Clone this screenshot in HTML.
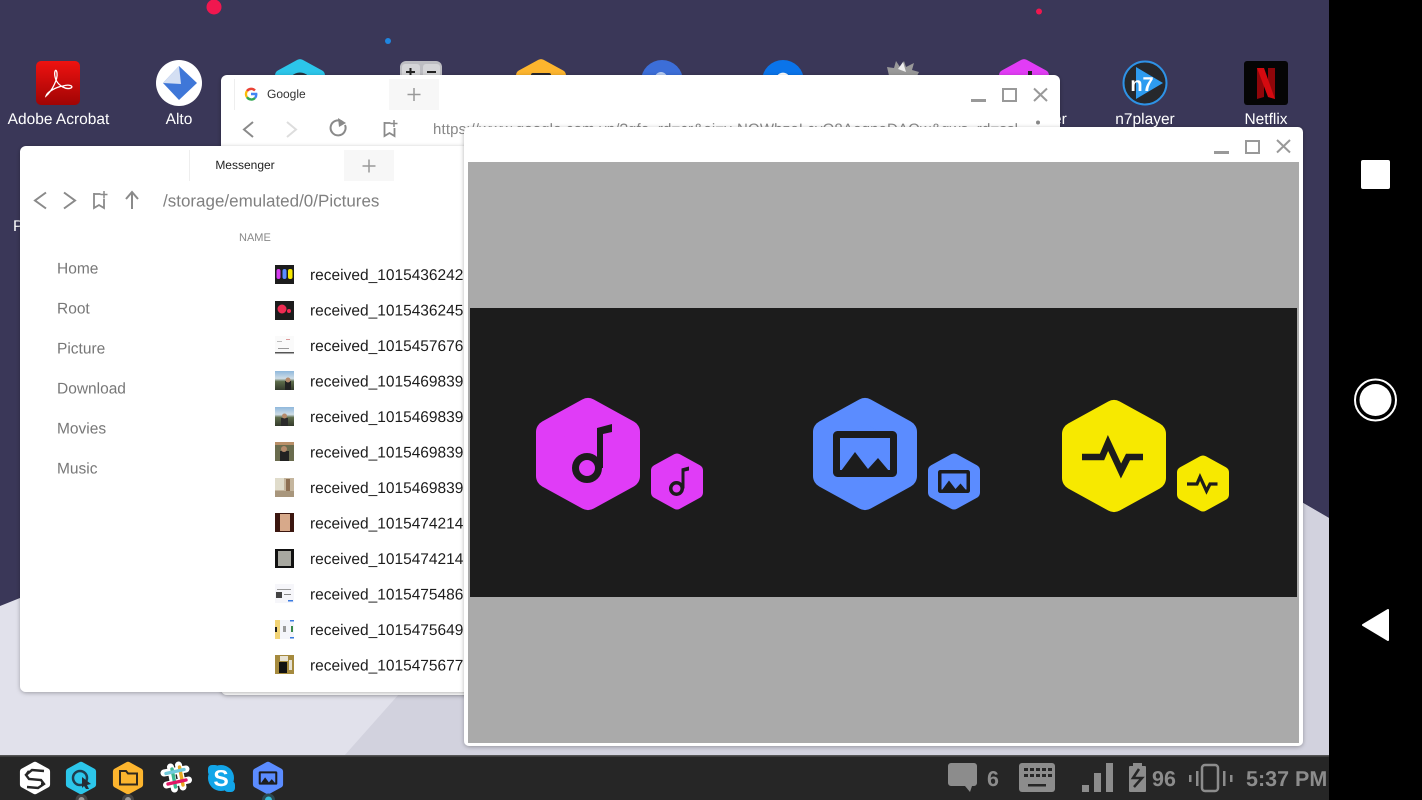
<!DOCTYPE html>
<html><head><meta charset="utf-8"><title>Desktop</title>
<style>
html,body{margin:0;padding:0;background:#000;overflow:hidden}
svg{display:block;position:absolute;left:0;top:0;filter:blur(.35px)}
text{font-family:"Liberation Sans",sans-serif;text-rendering:geometricPrecision}
</style></head><body>
<svg width="1422" height="800" viewBox="0 0 1422 800" xmlns="http://www.w3.org/2000/svg">
<defs>
<polygon id="h" points="0,-44 40,-22 40,22 0,44 -40,22 -40,-22" stroke-width="24" stroke-linejoin="round"/>
<g id="note"><circle cx="-1" cy="14" r="11.5" fill="none" stroke="#1c1c1c" stroke-width="7"/><polygon points="9,-26 24,-30 24,-22 15,-20 15,14 9,14" fill="#1c1c1c"/></g>
<g id="pic"><rect x="-28.5" y="-19.5" width="57" height="39" rx="1" fill="none" stroke="#1c1c1c" stroke-width="7"/><polygon points="-24,17 -10,-2 3,15 13,4 24,17" fill="#1c1c1c"/></g>
<polyline id="pulse" points="-32,1 -12,1 -6,-13 7,15 14,1 29,1" fill="none" stroke="#1c1c1c" stroke-width="6.5"/>
<filter id="s" x="-5%" y="-5%" width="110%" height="110%"><feDropShadow dx="0" dy="1" stdDeviation="2" flood-color="#000" flood-opacity=".3"/></filter>
<linearGradient id="red" x1="0" y1="0" x2="0" y2="1"><stop offset="0" stop-color="#ee1210"/><stop offset="1" stop-color="#a00404"/></linearGradient>
<linearGradient id="sky" x1="0" y1="0" x2="0" y2="1"><stop offset="0" stop-color="#8fb8dc"/><stop offset=".4" stop-color="#cfdde6"/><stop offset=".55" stop-color="#5d6c4a"/><stop offset="1" stop-color="#343a2c"/></linearGradient>
</defs>

<!-- wallpaper -->
<rect width="1329" height="800" fill="#3a3758"/>
<polygon points="0,606 876,255 1329,518 1329,760 0,760" fill="#e1e1eb"/>
<polygon points="344,756 700,355 876,255 1329,518 1329,760" fill="#d2d2de"/>
<circle cx="214" cy="7" r="7.5" fill="#f0174f"/>
<circle cx="388" cy="41" r="3" fill="#1f86e0"/>
<circle cx="1039" cy="11.5" r="3" fill="#f0174f"/>

<!-- desktop icons -->
<rect x="36" y="61" width="44" height="44" rx="5" fill="url(#red)"/>
<path d="M46 96C52 91 58 79 57 73C56 67 53 72 56 80C59 86 66 90 71 88C74 86 69 84 63 86C56 87 47 92 46 96Z" fill="none" stroke="#fff" stroke-width="1.3"/>
<text x="58.500" y="124" font-size="15.500" fill="#fff" text-anchor="middle">Adobe Acrobat</text>
<circle cx="179" cy="83" r="23" fill="#fff"/>
<polygon points="179,66 197,83 179,100 163,83" fill="#3f77d8"/>
<polygon points="179,66 181,84 163,83" fill="#d4dff3"/>
<text x="179" y="124" font-size="15.500" fill="#fff" text-anchor="middle">Alto</text>
<g transform="translate(300,86) scale(.48)"><use href="#h" fill="#2cc6ea" stroke="#2cc6ea"/></g>
<circle cx="300" cy="84" r="9" fill="none" stroke="#26323f" stroke-width="5"/>
<rect x="400" y="61" width="42" height="40" rx="6" fill="#bdbdc2"/>
<rect x="402" y="64" width="18" height="20" rx="3" fill="#d5d5d8"/><rect x="423" y="64" width="17" height="20" rx="3" fill="#d5d5d8"/>
<path d="M406 72h9M410.500 68v8M427 72h9" stroke="#222" stroke-width="2"/>
<g transform="translate(541,86) scale(.48)"><use href="#h" fill="#fdb52e" stroke="#fdb52e"/></g>
<rect x="531" y="73" width="20" height="8" rx="2" fill="#26262e"/>
<circle cx="662" cy="81" r="21" fill="#3c6ed8"/><circle cx="661" cy="78" r="6" fill="#b9cdf2"/>
<circle cx="783" cy="81" r="21" fill="#0a74ea"/><path d="M771 82a6 6 0 0 1 6-6a7 7 0 0 1 12 0a6 6 0 0 1 6 6z" fill="#fff"/>
<polygon points="887,67 894,68 896,61 900,67 904,61 906,67 914,63 912,70 919,72 915,80 890,80" fill="#999"/>
<polygon points="898,69 903,62 906,72" fill="#eee"/>
<g transform="translate(1024,86) scale(.48)"><use href="#h" fill="#e23cf6" stroke="#e23cf6"/></g>
<rect x="1028" y="71" width="4" height="6" fill="#222"/>
<text x="1053" y="124" font-size="15.500" fill="#fff">er</text>
<circle cx="1145" cy="83" r="21.500" fill="#26282c" stroke="#2e92e6" stroke-width="2"/>
<polygon points="1136,67 1163,83 1136,99" fill="#2e9cf0"/>
<text x="1142" y="91" font-size="20" font-weight="bold" fill="#fff" text-anchor="middle">n7</text>
<text x="1145" y="124" font-size="15.500" fill="#fff" text-anchor="middle">n7player</text>
<rect x="1244" y="61" width="44" height="44" rx="3" fill="#050505"/>
<polygon points="1257,68 1264,68 1264,97 1257,99" fill="#8f060a"/><polygon points="1268,68 1275,68 1275,99 1268,97" fill="#8f060a"/>
<polygon points="1257,68 1264,68 1275,99 1268,97" fill="#d40a10"/>
<text x="1266" y="124" font-size="15.500" fill="#fff" text-anchor="middle">Netflix</text>
<text x="13" y="231" font-size="15.500" fill="#fff">P</text>

<!-- chrome window -->
<rect x="221" y="75" width="839" height="620" rx="6" fill="#fff" filter="url(#s)"/>
<rect x="234" y="79" width="1" height="31" fill="#eee"/>
<g fill="none" stroke-width="2.400">
<path d="M255 90.500A5.200 5.200 0 0 0 247 91" stroke="#ea4335"/>
<path d="M247 91A5.200 5.200 0 0 0 247 97.200" stroke="#fbbc05"/>
<path d="M247 97.200A5.200 5.200 0 0 0 255 98" stroke="#34a853"/>
<path d="M255 98A5.200 5.200 0 0 0 256.200 94H251" stroke="#4285f4"/>
</g>
<text x="267" y="98" font-size="12" fill="#333">Google</text>
<rect x="389" y="79" width="50" height="31" fill="#f7f7f7"/>
<path d="M414 88v13M407.500 94.500h13" stroke="#999" stroke-width="1.500"/>
<rect x="971" y="99" width="15" height="3" fill="#999"/>
<rect x="1003" y="89" width="13" height="12" fill="none" stroke="#999" stroke-width="2"/>
<path d="M1034 88.500l13 12.500M1047 88.500l-13 12.500" stroke="#999" stroke-width="2"/>
<path d="M253 122l-9 7.500 9 7.500" fill="none" stroke="#8a8a8a" stroke-width="2"/>
<path d="M287 122l9 7.500-9 7.500" fill="none" stroke="#ddd" stroke-width="2"/>
<path d="M345 125a7.500 7.500 0 1 1-3-3.500" fill="none" stroke="#8a8a8a" stroke-width="2"/><polygon points="338,118 346,123 339,127" fill="#8a8a8a"/>
<path d="M384.500 123h6M384.500 122v14l5-3 5 3v-8" fill="none" stroke="#8a8a8a" stroke-width="1.800"/><path d="M394 120v7M390.500 123.500h7" stroke="#8a8a8a" stroke-width="1.500"/>
<text x="433" y="134" font-size="15" fill="#888" textLength="585">https://www.google.com.vn/?gfe_rd=cr&amp;ei=v-NOWbzeLcyO8AeqneDAQw&amp;gws_rd=ssl</text>
<circle cx="1038" cy="122.500" r="2" fill="#888"/>

<!-- files window -->
<rect x="20" y="146" width="450" height="546" rx="6" fill="#fff" filter="url(#s)"/>
<rect x="189" y="150" width="1" height="31" fill="#eee"/>
<text x="245" y="169" font-size="12" fill="#222" text-anchor="middle">Messenger</text>
<rect x="344" y="150" width="50" height="31" fill="#f7f7f7"/>
<path d="M369 159.500v13M362.500 166h13" stroke="#999" stroke-width="1.500"/>
<path d="M46 192.500l-11 8 11 8" fill="none" stroke="#8a8a8a" stroke-width="2"/>
<path d="M64 192.500l11 8-11 8" fill="none" stroke="#8a8a8a" stroke-width="2"/>
<path d="M94 194h6.500M94 193v15l5-3 5 3v-9" fill="none" stroke="#8a8a8a" stroke-width="1.800"/><path d="M104 191v7.500M100.500 194.500h7" stroke="#8a8a8a" stroke-width="1.500"/>
<path d="M132 209v-16M126 199l6-7 6 7" fill="none" stroke="#8a8a8a" stroke-width="2"/>
<text x="163" y="206.500" font-size="17" fill="#808080">/storage/emulated/0/Pictures</text>
<text x="239" y="241" font-size="11" fill="#888">NAME</text>
<g font-size="15.500" fill="#777">
<text x="57" y="273.500">Home</text>
<text x="57" y="313.500">Root</text>
<text x="57" y="353.500">Picture</text>
<text x="57" y="393.500">Download</text>
<text x="57" y="433.500">Movies</text>
<text x="57" y="473.500">Music</text>
</g>
<g font-size="15.500" fill="#1c1c1c">
<text x="310" y="280">received_1015436242</text>
<text x="310" y="315.500">received_1015436245</text>
<text x="310" y="351">received_1015457676</text>
<text x="310" y="386.500">received_1015469839</text>
<text x="310" y="422">received_1015469839</text>
<text x="310" y="457.500">received_1015469839</text>
<text x="310" y="493">received_1015469839</text>
<text x="310" y="528.500">received_1015474214</text>
<text x="310" y="564">received_1015474214</text>
<text x="310" y="599.500">received_1015475486</text>
<text x="310" y="635">received_1015475649</text>
<text x="310" y="670.500">received_1015475677</text>
</g>
<!-- thumbnails -->
<rect x="275" y="265" width="19" height="19" fill="#1c1c1c"/><rect x="276.500" y="269" width="4" height="10" rx="2" fill="#d63cf0"/><rect x="282.500" y="269" width="4" height="10" rx="2" fill="#5b8cff"/><rect x="288" y="269" width="4.500" height="10" rx="2" fill="#f7e900"/>
<rect x="275" y="301" width="19" height="19" fill="#1c1c1c"/><circle cx="282" cy="309" r="4.500" fill="#ee2b52"/><circle cx="289" cy="311" r="2" fill="#ee2b52"/>
<rect x="275" y="336" width="19" height="19" fill="#fafafa"/><rect x="275" y="352" width="19" height="1.500" fill="#555"/><rect x="278" y="348" width="11" height="1" fill="#999"/><rect x="277" y="341" width="5" height="1" fill="#bbb"/><rect x="286" y="339" width="4" height="1" fill="#d99"/>
<rect x="275" y="371" width="19" height="19" fill="url(#sky)"/><rect x="285" y="381" width="6" height="9" fill="#222"/><circle cx="288" cy="380" r="2.500" fill="#b58a6b"/>
<rect x="275" y="407" width="19" height="19" fill="url(#sky)"/><rect x="281" y="418" width="7" height="8" fill="#2b2b2b"/><circle cx="284.500" cy="416" r="2.500" fill="#b58a6b"/>
<rect x="275" y="442" width="19" height="19" fill="#6a6c4e"/><rect x="275" y="442" width="19" height="3" fill="#b98f68"/><rect x="280" y="451" width="9" height="10" fill="#222"/><circle cx="284" cy="449" r="3" fill="#b58a6b"/>
<rect x="275" y="478" width="19" height="19" fill="#c5b69e"/><rect x="275" y="478" width="9" height="12" fill="#e0dccb"/><rect x="286" y="479" width="4" height="16" fill="#8d6f52"/><rect x="275" y="491" width="19" height="6" fill="#a8967c"/>
<rect x="275" y="513" width="19" height="19" fill="#3b160f"/><rect x="280" y="514" width="10" height="17" fill="#d7a98a"/>
<rect x="275" y="549" width="19" height="19" fill="#111"/><rect x="278" y="551" width="13" height="15" fill="#a8a8a0"/>
<rect x="275" y="584" width="19" height="19" fill="#f6f6fa"/><rect x="276" y="592" width="6" height="6" fill="#444"/><rect x="277" y="589" width="14" height="1" fill="#999"/><rect x="284" y="594" width="7" height="1" fill="#888"/><rect x="288" y="600" width="5" height="1.500" fill="#3a7be0"/>
<rect x="275" y="620" width="19" height="19" fill="#f4f5fa"/><rect x="275" y="620" width="5" height="19" fill="#f2d476"/><rect x="275" y="627" width="2" height="5" fill="#222"/><rect x="290" y="620" width="4" height="1.500" fill="#3a7be0"/><rect x="290" y="637" width="4" height="1.500" fill="#3a7be0"/><rect x="283" y="626" width="3" height="6" fill="#999"/><rect x="291" y="626" width="2" height="6" fill="#3a8a4a"/>
<rect x="275" y="655" width="19" height="19" fill="#a58a3e"/><rect x="279" y="662" width="8" height="11" fill="#111"/><rect x="280" y="656" width="8" height="5" fill="#e8e3d4"/><rect x="289" y="660" width="3" height="10" fill="#e4e0d4"/>

<!-- viewer window -->
<rect x="464" y="127" width="839" height="619" rx="5" fill="#fff" filter="url(#s)"/>
<rect x="1214" y="151" width="15" height="3" fill="#999"/>
<rect x="1246" y="141" width="13" height="12" fill="none" stroke="#999" stroke-width="2"/>
<path d="M1277 140l13 12.500M1290 140l-13 12.500" stroke="#999" stroke-width="2"/>
<rect x="468" y="162" width="831" height="581" fill="#aaa"/>
<rect x="470" y="308" width="827" height="289" fill="#1c1c1c"/>
<g transform="translate(588,454)"><use href="#h" fill="#e03cf7" stroke="#e03cf7"/><use href="#note"/></g>
<g transform="translate(677,481.500) scale(.5)"><use href="#h" fill="#e03cf7" stroke="#e03cf7"/><use href="#note"/></g>
<g transform="translate(865,454)"><use href="#h" fill="#5b8cff" stroke="#5b8cff"/><use href="#pic"/></g>
<g transform="translate(954,481.500) scale(.5)"><use href="#h" fill="#5b8cff" stroke="#5b8cff"/><use href="#pic"/></g>
<g transform="translate(1114,456)"><use href="#h" fill="#f7e900" stroke="#f7e900"/><use href="#pulse"/></g>
<g transform="translate(1203,483.500) scale(.5)"><use href="#h" fill="#f7e900" stroke="#f7e900"/><use href="#pulse"/></g>

<!-- taskbar -->
<rect y="756" width="1329" height="44" fill="#262626"/>
<rect y="755" width="1329" height="1.500" fill="#555"/>
<g transform="translate(35,778) scale(.29)"><use href="#h" fill="#fff" stroke="#fff"/></g>
<path d="M44 771l-12-1-6 5 3 4 12 1 3 4-6 4-11-1M29 771l-3 4M41 784l3 0" fill="none" stroke="#262626" stroke-width="2.400"/>
<g transform="translate(81,778) scale(.29)"><use href="#h" fill="#2cc6ea" stroke="#2cc6ea"/></g>
<circle cx="80" cy="778" r="7" fill="none" stroke="#1f3d4e" stroke-width="2.500"/>
<polygon points="82,777 91,784 87,785 89,789 86,789 84,786 82,788" fill="#262b33"/>
<g transform="translate(128,778) scale(.29)"><use href="#h" fill="#fdb52e" stroke="#fdb52e"/></g>
<path d="M120 771h6l2 2.500h9v11h-17z" fill="none" stroke="#332a1e" stroke-width="2"/>
<g fill="none" stroke-width="7" stroke="#fff" stroke-linecap="round">
<path d="M170.500 767l4 22M178.500 765l4.500 22M164 773l22 -4M166.500 785l22-5"/>
</g>
<g fill="none" stroke-width="3.400" stroke-linecap="round">
<path d="M172 769l3.500 18" stroke="#3eb991"/><path d="M179.500 767l3.500 18" stroke="#e9a820"/><path d="M166 773.500l18-4" stroke="#70cadb"/><path d="M168 784l18-4" stroke="#e01765"/>
</g>
<circle cx="221" cy="778" r="13" fill="#12a5e8"/><rect x="208" y="765" width="11" height="11" rx="4" fill="#12a5e8"/><rect x="224" y="781" width="11" height="11" rx="4" fill="#12a5e8"/>
<text x="221" y="786" font-size="23" font-weight="bold" fill="#fff" text-anchor="middle">S</text>
<g transform="translate(268,778) scale(.29)"><use href="#h" fill="#5b8cff" stroke="#5b8cff"/><use href="#pic"/></g>
<circle cx="81.500" cy="800" r="6" fill="#444"/><circle cx="81.500" cy="800" r="3" fill="#999"/>
<circle cx="128" cy="800" r="6" fill="#444"/><circle cx="128" cy="800" r="3" fill="#999"/>
<circle cx="268.500" cy="800" r="6.500" fill="#2c4a52"/><circle cx="268.500" cy="800" r="3.500" fill="#35bcd8"/>

<g fill="#8c8c8c">
<path d="M951 763h23a3 3 0 0 1 3 3v17a3 3 0 0 1-3 3h-2l-2 6-5-6h-14a3 3 0 0 1-3-3v-17a3 3 0 0 1 3-3z"/>
<text x="987" y="786" font-size="21.500" font-weight="bold">6</text>
<rect x="1019" y="763" width="36" height="29" rx="3"/>
<rect x="1082" y="785" width="7" height="7"/><rect x="1094" y="773" width="7" height="19"/><rect x="1106" y="763" width="7" height="29"/>
<rect x="1133" y="763" width="9" height="3"/><rect x="1129" y="766" width="17" height="26" rx="1"/>
<text x="1152" y="786" font-size="21.500" font-weight="bold">96</text>
<rect x="1189" y="775" width="2.500" height="7"/><rect x="1196" y="771" width="2.500" height="15"/><rect x="1223" y="771" width="2.500" height="15"/><rect x="1230" y="775" width="2.500" height="7"/>
<text x="1246" y="786" font-size="21.500" font-weight="bold">5:37 PM</text>
</g>
<g fill="#262626">
<rect x="1024" y="768" width="4" height="3"/><rect x="1030" y="768" width="4" height="3"/><rect x="1036" y="768" width="4" height="3"/><rect x="1042" y="768" width="4" height="3"/><rect x="1048" y="768" width="4" height="3"/>
<rect x="1024" y="774" width="4" height="3"/><rect x="1030" y="774" width="4" height="3"/><rect x="1036" y="774" width="4" height="3"/><rect x="1042" y="774" width="4" height="3"/><rect x="1048" y="774" width="4" height="3"/>
<rect x="1028" y="784" width="18" height="2.500"/>
</g>
<polyline points="1139,769 1133,778 1142,778 1134,787" fill="none" stroke="#262626" stroke-width="2.500"/>
<rect x="1202" y="765" width="16" height="26" rx="3" fill="none" stroke="#8c8c8c" stroke-width="2.500"/>

<!-- nav bar -->
<rect x="1329" width="93" height="800" fill="#000"/>
<rect x="1361" y="160" width="29" height="29" rx="2" fill="#fff"/>
<circle cx="1375.500" cy="400" r="20.500" fill="none" stroke="#fff" stroke-width="2"/>
<circle cx="1375.500" cy="400" r="16" fill="#fff"/>
<polygon points="1363,625 1388,610 1388,640" fill="#fff" stroke="#fff" stroke-width="2" stroke-linejoin="round"/>
</svg>
</body></html>
